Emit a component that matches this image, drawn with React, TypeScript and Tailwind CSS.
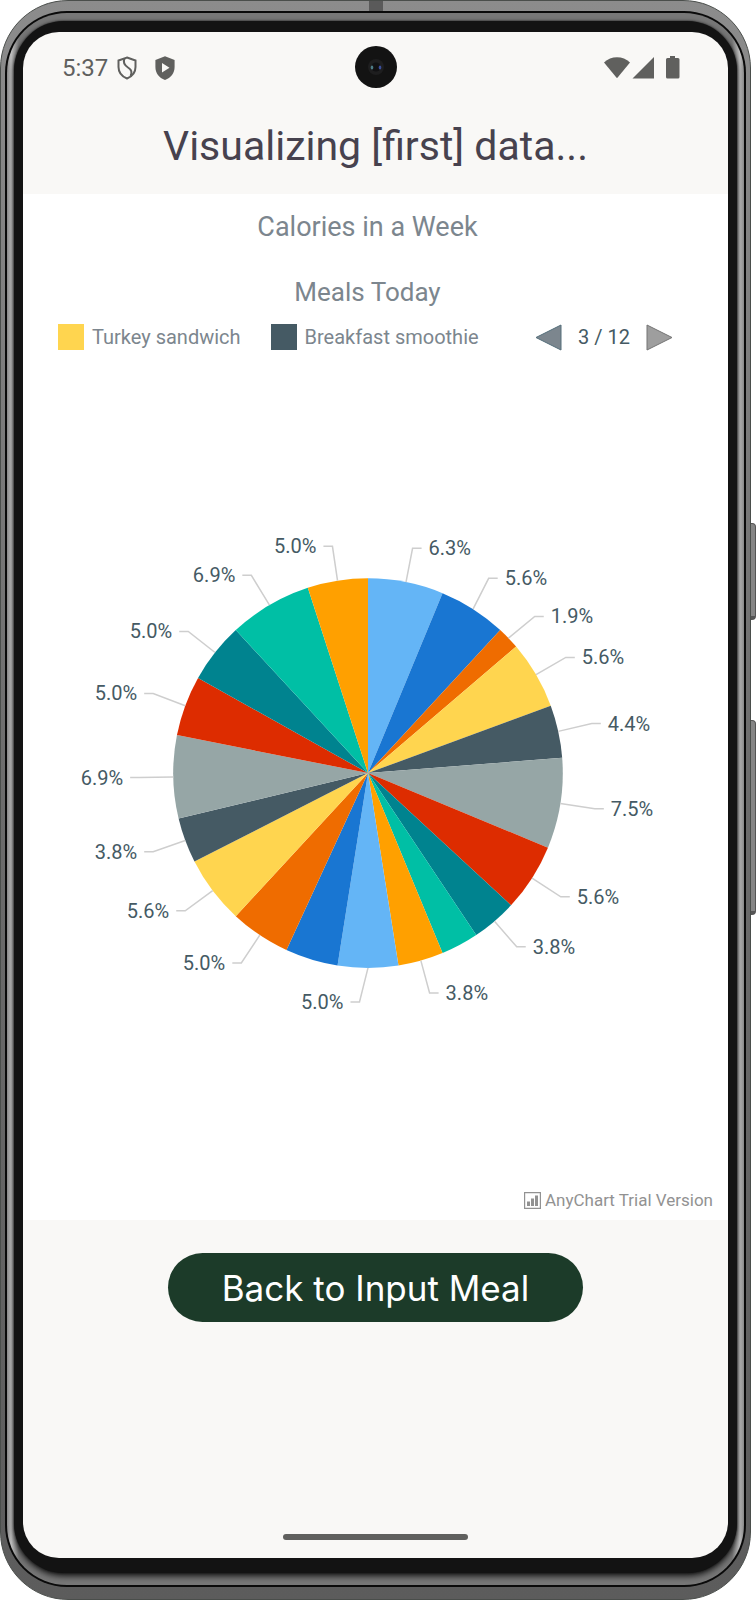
import React from "react";

type Slice = {
  value: number;
  color: string;
  label?: string;
  elbow?: [number, number];
};

const slices: Slice[] = [
  { value: 10, color: "#64b5f6", label: "6.3%", elbow: [412, 548] },
  { value: 9, color: "#1976d2", label: "5.6%", elbow: [488, 578] },
  { value: 3, color: "#ef6c00", label: "1.9%", elbow: [534, 616] },
  { value: 9, color: "#ffd54f", label: "5.6%", elbow: [565, 657] },
  { value: 7, color: "#455a64", label: "4.4%", elbow: [591, 723] },
  { value: 12, color: "#96a6a6", label: "7.5%", elbow: [594, 808] },
  { value: 9, color: "#dd2c00", label: "5.6%", elbow: [560, 896] },
  { value: 6, color: "#00838f", label: "3.8%", elbow: [516, 946] },
  { value: 5, color: "#00bfa5" },
  { value: 6, color: "#ffa000", label: "3.8%", elbow: [429, 992] },
  { value: 8, color: "#64b5f6", label: "5.0%", elbow: [359, 1001] },
  { value: 7, color: "#1976d2" },
  { value: 8, color: "#ef6c00", label: "5.0%", elbow: [241, 962] },
  { value: 9, color: "#ffd54f", label: "5.6%", elbow: [185, 910] },
  { value: 6, color: "#455a64", label: "3.8%", elbow: [153, 851] },
  { value: 11, color: "#96a6a6", label: "6.9%", elbow: [139, 777] },
  { value: 8, color: "#dd2c00", label: "5.0%", elbow: [153, 693] },
  { value: 8, color: "#00838f", label: "5.0%", elbow: [188, 631] },
  { value: 11, color: "#00bfa5", label: "6.9%", elbow: [251, 575] },
  { value: 8, color: "#ffa000", label: "5.0%", elbow: [332, 546] },
];

const CX = 367.5;
const CY = 772.5;
const R = 194.5;
const total = slices.reduce((sum, s) => sum + s.value, 0);

function point(share: number): [number, number] {
  const a = (share / total) * Math.PI * 2;
  return [CX + R * Math.sin(a), CY - R * Math.cos(a)];
}

function PieChart() {
  let start = 0;
  return (
    <svg
      viewBox="23 351 688 820"
      className="block h-auto w-full"
      role="img"
      aria-label="Meals Today"
      fontFamily="Roboto, sans-serif"
    >
      {slices.map((s, i) => {
        const [x1, y1] = point(start);
        const [x2, y2] = point(start + s.value);
        const [mx, my] = point(start + s.value / 2);
        start += s.value;
        const side = s.elbow && s.elbow[0] > CX ? 1 : -1;
        return (
          <g key={i}>
            <path d={`M${CX} ${CY}L${x1} ${y1}A${R} ${R} 0 0 1 ${x2} ${y2}Z`} fill={s.color} />
            {s.elbow && (
              <>
                <polyline
                  points={`${mx},${my} ${s.elbow[0]},${s.elbow[1]} ${s.elbow[0] + side * 9},${s.elbow[1]}`}
                  fill="none"
                  stroke="#cecece"
                  strokeWidth="1.5"
                />
                <text
                  x={s.elbow[0] + side * 16}
                  y={s.elbow[1] + 7}
                  textAnchor={side > 0 ? "start" : "end"}
                  fontSize="20"
                  fill="#455a64"
                >
                  {s.label}
                </text>
              </>
            )}
          </g>
        );
      })}
    </svg>
  );
}

function StatusBar() {
  return (
    <div className="relative flex h-[72px] items-center justify-between pr-12 pl-[39px] text-[#60605e]">
      <div className="flex items-center">
        <span className="text-2xl">5:37</span>
        <svg className="ml-[9px] h-6 w-5" viewBox="0 0 20 24" fill="none" stroke="currentColor" strokeWidth="2">
          <path d="M10 1.5 18.5 4.5V11C18.5 16.5 15 20.5 10 22.5 5 20.5 1.5 16.5 1.5 11V4.500Z" />
          <path d="M7.500 2.500C5.500 7 8 9.500 11 11.500 15 14 15.500 16.500 13.500 20" />
        </svg>
        <svg className="ml-[18px] h-6 w-5" viewBox="0 0 20 24" fill="currentColor">
          <path fillRule="evenodd" d="M10 .3 19.600 4V11C19.600 17 16 22 10 24 4 22 .4 17 .4 11V4ZM7 7V16.500L14.500 11.700Z" />
        </svg>
      </div>
      <div className="absolute top-[14px] left-1/2 flex size-[42px] -translate-x-1/2 items-center justify-center rounded-full bg-[#131313]">
        <svg className="size-5" viewBox="0 0 20 20">
          <circle cx="10" cy="10" r="8" fill="#1e1e1f" />
          <circle cx="10" cy="10" r="4.500" fill="#111113" />
          <ellipse cx="6" cy="10.500" rx="1.300" ry="2" fill="#4d7c86" />
          <ellipse cx="14" cy="10.500" rx="1.300" ry="2" fill="#3b4f9c" />
        </svg>
      </div>
      <svg className="h-6 w-[76px]" viewBox="0 0 76 24" fill="currentColor">
        <path d="M0 6.500C7-.4 19-.4 26 6.500L13 22.300Z" />
        <path d="M28.500 22.600 50 1V22.600Z" />
        <path d="M66 0H71V2H74Q75.500 2 75.500 3.500V21Q75.500 22.600 74 22.600H63.500Q62 22.600 62 21V3.500Q62 2 63.500 2H66Z" />
      </svg>
    </div>
  );
}

function Legend() {
  return (
    <div className="flex items-center pl-[35px] text-xl leading-7 text-[#7c868e]">
      <span className="size-[26px] bg-[#ffd54f]" />
      <span className="ml-2">Turkey sandwich</span>
      <span className="ml-[30px] size-[26px] bg-[#455a64]" />
      <span className="ml-2">Breakfast smoothie</span>
      <div className="mr-[39px] ml-auto flex items-center gap-4 text-[#455a64]">
        <button type="button" aria-label="Previous page">
          <svg className="block size-[27px]" viewBox="0 0 27 27">
            <path d="M26 1V26L1 13.500Z" fill="#7c868e" stroke="#546e7a" />
          </svg>
        </button>
        <span>3 / 12</span>
        <button type="button" aria-label="Next page">
          <svg className="block size-[27px]" viewBox="0 0 27 27">
            <path d="M1 1V26L26 13.500Z" fill="#9e9e9e" stroke="#757575" />
          </svg>
        </button>
      </div>
    </div>
  );
}

export default function App() {
  return (
    <div className="relative bg-white pr-[5px] font-[Roboto,sans-serif]">
      <div className="absolute top-[523px] right-0 h-[97px] w-1.5 rounded-r-sm border border-[#555] border-b-4 bg-[#858585]" />
      <div className="absolute top-[720px] right-0 h-[195px] w-1.5 rounded-r-sm border border-[#555] border-b-4 bg-[#858585]" />
      <div className="relative flex min-h-screen flex-col rounded-[68px] border border-[#4a4e4b] bg-linear-to-b from-[#8c8c8c] via-[#6c6c6c] to-[#5c5c5c] px-1 pt-2.5 pb-3">
        <div className="absolute top-0 left-1/2 h-2.5 w-3.5 -translate-x-1/2 bg-[#5a5a5a]" />
        <div className="flex flex-1 flex-col rounded-[62px] bg-[#0a0a0a] p-0.5">
          <div className="flex flex-1 flex-col rounded-[60px] bg-[linear-gradient(to_right,#888,#c4c4c4_4px,#777_12px,#777_calc(100%-12px),#c4c4c4_calc(100%-4px),#888)] px-[7px] pt-2 pb-3">
            <div className="flex flex-1 flex-col rounded-[50px] bg-[#131313] px-[9px] pt-[11px] pb-[15px] shadow-[0_0_2px_#131313,0_3px_6px_#131313]">
              <main className="flex flex-1 flex-col overflow-hidden rounded-[36px] bg-[#f9f8f6]">
                <StatusBar />
                <h1 className="pt-[17px] pb-[23px] text-center text-[41px] leading-[50px] text-[#47424e]">
                  Visualizing [first] data...
                </h1>
                <section className="bg-white text-[#7c868e]">
                  <div className="pr-4">
                    <h2 className="pt-[17px] text-center text-[27px] leading-8">Calories in a Week</h2>
                    <h3 className="pt-[33px] pb-[15px] text-center text-[26px] leading-8">Meals Today</h3>
                    <Legend />
                    <PieChart />
                  </div>
                  <div className="flex items-center justify-end gap-1 pt-4 pr-[15px] pb-2 text-[17px] leading-6 text-[#929292]">
                    <svg className="size-[17px]" viewBox="0 0 17 17" fill="#929292">
                      <path d="M.6.6H16.400V16.400H.6Z" fill="none" stroke="#929292" strokeWidth="1.200" />
                      <path d="M3 9.500H6V14H3ZM7 6.500H10V14H7ZM11 3.500H14V14H11Z" />
                    </svg>
                    <span>AnyChart Trial Version</span>
                  </div>
                </section>
                <button
                  type="button"
                  className="mx-auto mt-[33px] rounded-full bg-[#1c3b29] px-[54px] pt-[15px] pb-[13px] font-[Inter,sans-serif] text-[35px] leading-[41px] text-white"
                >
                  Back to Input Meal
                </button>
                <div className="mx-auto mt-auto mb-[18px] h-1.5 w-[185px] rounded-full bg-[#60605e]" />
              </main>
            </div>
          </div>
        </div>
      </div>
    </div>
  );
}
